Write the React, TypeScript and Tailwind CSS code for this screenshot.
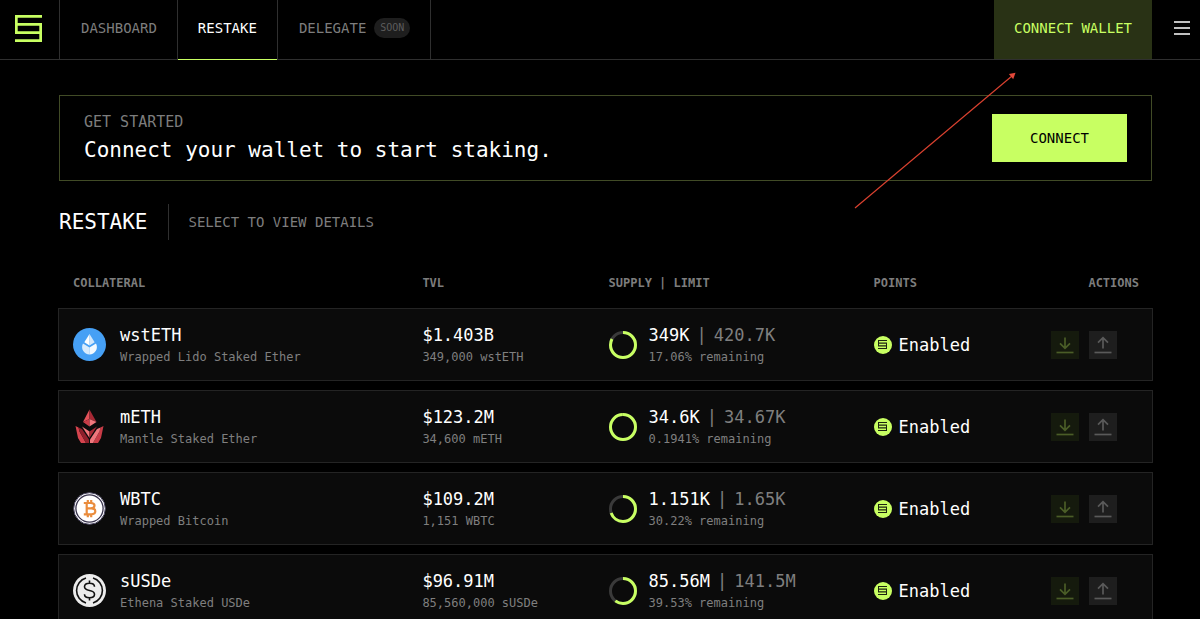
import React from "react";
import { clsx } from "clsx";

type Row = {
  symbol: string;
  name: string;
  tvl: string;
  amount: string;
  supply: string;
  limit: string;
  remaining: string;
  filled: number;
  icon: React.ReactNode;
};

function Mark({ className, weight }: { className: string; weight: number }) {
  return (
    <svg viewBox="0 0 26 26" fill="none" stroke="currentColor" strokeWidth={weight} className={className} aria-hidden="true">
      <path d="M26 1.3H1.3V9.1H24.7V24.7H0M1.3 8V16.9H24.7" />
    </svg>
  );
}

function WstEthIcon() {
  return (
    <svg viewBox="0 0 33 33" className="size-[33px] shrink-0" aria-hidden="true">
      <circle cx="16.5" cy="16.5" r="16.5" fill="#46a0f5" />
      <path d="M16.5 6l-5.2 8.2 5.2 3.2z" fill="#fff" />
      <path d="M16.5 6l5.2 8.2-5.2 3.2z" fill="#d3e8fc" />
      <path d="M10 15.600l6.500 3.900v6.900a7.300 7.300 0 0 1-6.500-10.800z" fill="#d9ecfd" />
      <path d="M23 15.600l-6.500 3.900v6.900a7.300 7.300 0 0 0 6.500-10.800z" fill="#f4faff" />
    </svg>
  );
}

function MEthIcon() {
  return (
    <svg viewBox="0 0 33 35" className="h-[35px] w-[33px] shrink-0" aria-hidden="true">
      <path d="M16.500 .5L10 13l6.500-3z" fill="#e2525a" />
      <path d="M16.500 .5L23.500 13l-7-3z" fill="#a62834" />
      <path d="M10 13l6.500-3v7.500z" fill="#c93c47" />
      <path d="M23.500 13l-7-3v7.500z" fill="#f0777c" />
      <path d="M2.500 17l3 1.500 1 4 6.500 11.500H8L5 29z" fill="#d5444e" />
      <path d="M5.500 18.500l3.500 1.500 7 10.500V34h-3L6.500 22.500z" fill="#8f1f2b" />
      <path d="M9 17.500l7.500 5V29z" fill="#f0777c" />
      <path d="M24 17.500l-7.500 5V29z" fill="#a62834" />
      <path d="M30.500 17l-3 1.500-1 4L20 34h5l3-5z" fill="#c93c47" />
      <path d="M27.500 18.500L24 20l-7 10.500V34h3l6.500-11.500z" fill="#f0777c" />
    </svg>
  );
}

function WbtcIcon() {
  return (
    <svg viewBox="0 0 33 33" className="size-[33px] shrink-0" aria-hidden="true">
      <circle cx="16.5" cy="16.5" r="15.8" fill="#fff" stroke="#4b4763" strokeWidth="1" />
      <circle cx="16.5" cy="16.5" r="13.6" fill="none" stroke="#37324c" strokeWidth="1.3" />
      <path
        d="M10.800 11h7c2.400 0 3.700.9 3.700 2.600s-1.300 2.700-3.700 2.700h-4 4.500c2.600 0 4 1.100 4 3s-1.400 3-4 3h-7.500M13.700 11v11.300M14.800 8v3M18.200 8v3M14.800 22.300v3M18.200 22.300v3"
        fill="none"
        stroke="#ea8c3c"
        strokeWidth="2.200"
      />
    </svg>
  );
}

function SusdeIcon() {
  return (
    <svg viewBox="0 0 33 33" className="size-[33px] shrink-0" fill="none" stroke="#111" strokeWidth="1.6" aria-hidden="true">
      <circle cx="16.5" cy="16.5" r="16.5" fill="#ececec" stroke="none" />
      <path d="M13 4a13 13 0 0 0 0 25M20 4a13 13 0 0 1 0 25" />
      <path d="M21.500 12.800c0-2.200-1.900-3.500-5-3.500s-5 1.300-5 3.500c0 2.500 2.200 3.200 5 3.700s5 1.200 5 3.700c0 2.200-1.900 3.500-5 3.500s-5-1.300-5-3.500M16.500 6.500v2.800M16.500 23.700v2.800" />
    </svg>
  );
}

const rows: Row[] = [
  { symbol: "wstETH", name: "Wrapped Lido Staked Ether", tvl: "$1.403B", amount: "349,000 wstETH", supply: "349K", limit: "420.7K", remaining: "17.06% remaining", filled: 82.94, icon: <WstEthIcon /> },
  { symbol: "mETH", name: "Mantle Staked Ether", tvl: "$123.2M", amount: "34,600 mETH", supply: "34.6K", limit: "34.67K", remaining: "0.1941% remaining", filled: 99.8, icon: <MEthIcon /> },
  { symbol: "WBTC", name: "Wrapped Bitcoin", tvl: "$109.2M", amount: "1,151 WBTC", supply: "1.151K", limit: "1.65K", remaining: "30.22% remaining", filled: 69.78, icon: <WbtcIcon /> },
  { symbol: "sUSDe", name: "Ethena Staked USDe", tvl: "$96.91M", amount: "85,560,000 sUSDe", supply: "85.56M", limit: "141.5M", remaining: "39.53% remaining", filled: 60.47, icon: <SusdeIcon /> },
];

function Ring({ filled }: { filled: number }) {
  return (
    <svg viewBox="0 0 28 28" fill="none" strokeWidth="3" className="size-7 shrink-0" aria-hidden="true">
      <circle cx="14" cy="14" r="12.5" stroke="#3a3a3a" />
      <circle cx="14" cy="14" r="12.5" stroke="#c8ff62" pathLength={100} strokeDasharray={`${filled} 100`} transform="rotate(-90 14 14)" />
    </svg>
  );
}

function ActionButton({ kind }: { kind: "Deposit" | "Withdraw" }) {
  const deposit = kind === "Deposit";
  return (
    <button
      type="button"
      aria-label={kind}
      className={clsx("flex size-7 items-center justify-center", deposit ? "bg-[#151a0d] text-[#4a5d27]" : "bg-[#1e1e1e] text-[#5a5a5a]")}
    >
      <svg viewBox="0 0 28 28" fill="none" stroke="currentColor" strokeWidth="1.7" className="size-7" aria-hidden="true">
        <path d="M5.500 21.500h17" />
        <path d={deposit ? "M14 6.500v10.500M9 12.300l5 5 5-5" : "M14 17.500V7M9 11.700l5-5 5 5"} />
      </svg>
    </button>
  );
}

const cell = "border-y border-[#242424] bg-[#0b0b0b] px-3.5 py-0";
const primary = "text-[17px] leading-6 text-white whitespace-nowrap";
const secondary = "text-xs leading-5 text-[#7f7f7f] whitespace-nowrap";

function Header() {
  return (
    <header className="flex h-[60px] shrink-0 items-stretch justify-between border-b border-[#2f2f2f] text-sm">
      <div className="flex">
        <a href="#home" aria-label="Home" className="flex w-[60px] items-center border-r border-[#2f2f2f] pb-[3px] pl-[15px] text-[#c8ff62]">
          <Mark className="size-[27px]" weight={2.6} />
        </a>
        <nav className="flex text-[#7d7d7d]">
          <a href="#dashboard" className="flex items-center pr-5 pb-[3px] pl-[21px]">DASHBOARD</a>
          <a href="#restake" className="-mb-px flex items-center border-x border-[#2f2f2f] px-5 pb-1 text-white shadow-[inset_0_-1px_0_#c8ff62]">RESTAKE</a>
          <a href="#delegate" className="flex items-center gap-2 border-r border-[#2f2f2f] pr-5 pb-[3px] pl-[21px]">
            DELEGATE
            <span className="rounded-full bg-[#1e1e1e] px-1.5 text-[10px] leading-5 text-[#5c5c5c]">SOON</span>
          </a>
        </nav>
      </div>
      <div className="flex">
        <button type="button" className="bg-[#293215] px-5 pb-[3px] text-[#c8ff62]">CONNECT WALLET</button>
        <button type="button" aria-label="Menu" className="flex w-12 items-center pb-[3px] pl-[22px] text-white">
          <svg viewBox="0 0 16 14" stroke="currentColor" strokeWidth="1.5" className="h-3.5 w-4" aria-hidden="true">
            <path d="M0 1h16M0 7h16M0 13h16" />
          </svg>
        </button>
      </div>
    </header>
  );
}

export default function App() {
  return (
    <div className="relative flex h-screen flex-col overflow-hidden bg-black font-['DejaVu_Sans_Mono',monospace] text-white">
      <Header />
      <main className="min-h-0 flex-1 overflow-y-auto pt-[35px] pr-12 pl-[59px] [scrollbar-width:none]">
        <section className="flex items-center justify-between border border-[#414b26] px-6 py-3.5">
          <div>
            <p className="text-[15px] leading-6 text-[#7d7d7d]">GET STARTED</p>
            <p className="text-[21px] leading-8">Connect your wallet to start staking.</p>
          </div>
          <button type="button" className="h-12 w-[135px] bg-[#c8ff62] text-sm text-black">CONNECT</button>
        </section>

        <div className="mt-[23px] flex h-9 items-center">
          <h1 className="text-[21px] leading-8">RESTAKE</h1>
          <p className="ml-5 flex h-9 items-center border-l border-[#2f2f2f] pl-5 text-sm text-[#7d7d7d]">SELECT TO VIEW DETAILS</p>
        </div>

        <div className="-mx-px mt-[18px]">
          <table className="w-full table-fixed border-separate border-spacing-x-0 border-spacing-y-[9px] text-left">
            <thead className="text-xs text-[#7d7d7d]">
              <tr className="h-8">
                <th className="w-[32%] px-[15px] font-bold">COLLATERAL</th>
                <th className="w-[17%] px-3.5 font-bold">TVL</th>
                <th className="w-[265px] px-3.5 font-bold">SUPPLY | LIMIT</th>
                <th className="px-3.5 font-bold">POINTS</th>
                <th className="px-3.5 text-right font-bold">ACTIONS</th>
              </tr>
            </thead>
            <tbody>
              {rows.map((row) => (
                <tr key={row.symbol} className="h-[73px]">
                  <td className={clsx(cell, "border-l")}>
                    <div className="flex items-center gap-3.5">
                      {row.icon}
                      <div>
                        <div className={primary}>{row.symbol}</div>
                        <div className={secondary}>{row.name}</div>
                      </div>
                    </div>
                  </td>
                  <td className={cell}>
                    <div className={primary}>{row.tvl}</div>
                    <div className={secondary}>{row.amount}</div>
                  </td>
                  <td className={cell}>
                    <div className="flex items-center gap-3">
                      <Ring filled={row.filled} />
                      <div>
                        <div className={clsx(primary, "flex gap-[7px]")}>
                          <span>{row.supply}</span>
                          <span className="text-[#7f7f7f]">|</span>
                          <span className="text-[#7f7f7f]">{row.limit}</span>
                        </div>
                        <div className={secondary}>{row.remaining}</div>
                      </div>
                    </div>
                  </td>
                  <td className={cell}>
                    <div className="flex items-center gap-[7px]">
                      <span className="flex size-[18px] shrink-0 items-center justify-center rounded-full bg-[#c8ff62] text-[#1c2410]">
                        <Mark className="size-[9px]" weight={3.2} />
                      </span>
                      <span className={primary}>Enabled</span>
                    </div>
                  </td>
                  <td className={clsx(cell, "border-r")}>
                    <div className="flex justify-end gap-2.5 pr-[21px]">
                      <ActionButton kind="Deposit" />
                      <ActionButton kind="Withdraw" />
                    </div>
                  </td>
                </tr>
              ))}
            </tbody>
          </table>
        </div>
      </main>
      <svg viewBox="0 0 166 140" className="pointer-events-none absolute top-[70px] right-[182px] h-[140px] w-[166px]" aria-hidden="true">
        <path d="M3 138L160 6" stroke="#d9412f" strokeWidth="1.2" />
        <path d="M163.500 2.800l-2.300 6.400-4.300-5.100z" fill="#e2483a" />
      </svg>
    </div>
  );
}
